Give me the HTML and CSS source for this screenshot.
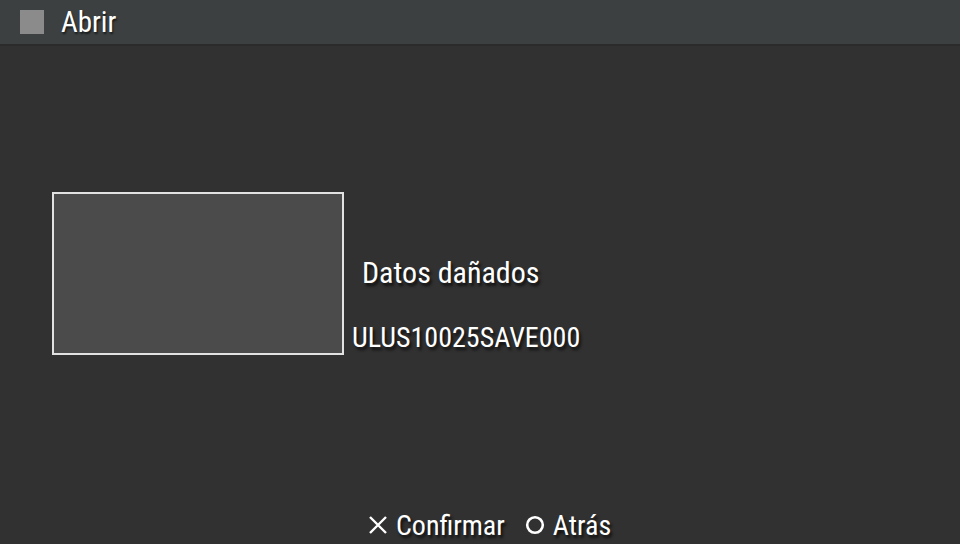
FILE: index.html
```html
<!DOCTYPE html>
<html>
<head>
<meta charset="utf-8">
<link rel="stylesheet" href="styles.css">
</head>
<body>
<div class="screen">
  <header class="titlebar">
    <span class="title-icon"></span>
    <span class="title-text">Abrir</span>
  </header>
  <main class="content">
    <div class="entry">
      <div class="thumb"></div>
      <div class="info">
        <div class="status">Datos dañados</div>
        <div class="filename">ULUS10025SAVE000</div>
      </div>
    </div>
  </main>
  <footer class="buttons">
    <span class="btn"><svg class="glyph" viewBox="0 0 20 20" width="20" height="20"><path d="M2 2 L18 18 M18 2 L2 18" stroke="#fff" stroke-width="2.4" fill="none"/></svg>Confirmar</span>
    <span class="btn"><svg class="glyph" viewBox="0 0 20 20" width="20" height="20"><circle cx="10" cy="10" r="7.8" stroke="#fff" stroke-width="2.6" fill="none"/></svg>Atrás</span>
  </footer>
</div>
</body>
</html>
```

FILE: styles.css
```css
html, body {
  margin: 0;
  padding: 0;
  background: #313131;
}
.screen {
  width: 960px;
  height: 544px;
  display: flex;
  flex-direction: column;
  font-family: Roboto, "Liberation Sans", sans-serif;
  font-weight: 450;
  font-stretch: condensed;
  color: #fff;
  overflow: hidden;
}
.titlebar {
  height: 44px;
  background: #3c4040;
  border-bottom: 2px solid #2b2b2b;
  display: flex;
  align-items: center;
  padding-left: 20px;
  box-sizing: content-box;
}
.title-icon {
  width: 24px;
  height: 24px;
  background: #8b8b8b;
  margin-right: 17px;
}
.title-text {
  font-size: 29px;
  text-shadow: 1px 2px 2px rgba(0,0,0,0.6);
}
.content {
  flex: 1;
  padding-left: 52px;
  padding-top: 146px;
}
.entry {
  display: flex;
  align-items: flex-end;
}
.thumb {
  width: 288px;
  height: 159px;
  background: #4b4b4b;
  border: 2px solid #e2e2e2;
}
.info {
  display: flex;
  flex-direction: column;
  padding-left: 8px;
}
.status {
  font-size: 30px;
  padding-left: 10px;
  margin-bottom: 31px;
  text-shadow: 2px 3px 3px rgba(0,0,0,0.7);
}
.filename {
  font-size: 28px;
  margin-bottom: 1px;
  text-shadow: 2px 3px 3px rgba(0,0,0,0.7);
}
.buttons {
  height: 38px;
  display: flex;
  justify-content: flex-start;
  padding-left: 368px;
  gap: 20px;
  align-items: center;
}
.btn {
  display: flex;
  align-items: center;
  font-size: 28px;
  text-shadow: 2px 3px 3px rgba(0,0,0,0.7);
}
.glyph {
  margin-right: 8px;
}
```
